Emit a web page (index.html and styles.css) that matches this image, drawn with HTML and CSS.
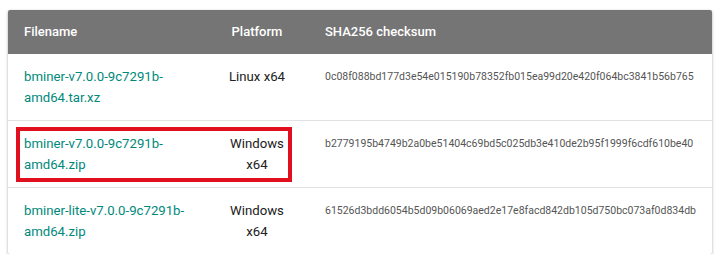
FILE: index.html
```html
<!DOCTYPE html>
<html>
<head>
<meta charset="utf-8">
<link rel="stylesheet" href="styles.css">
</head>
<body>
<div class="card">
  <table class="downloads">
    <colgroup>
      <col class="c-file">
      <col class="c-plat">
      <col class="c-sum">
    </colgroup>
    <thead>
      <tr>
        <th class="file">Filename</th>
        <th class="plat">Platform</th>
        <th class="sum">SHA256 checksum</th>
      </tr>
    </thead>
    <tbody>
      <tr>
        <td class="file"><a href="#">bminer-v7.0.0-9c7291b-amd64.tar.xz</a></td>
        <td class="plat">Linux x64</td>
        <td class="sum">0c08f088bd177d3e54e015190b78352fb015ea99d20e420f064bc3841b56b765</td>
      </tr>
      <tr>
        <td class="file"><a href="#">bminer-v7.0.0-9c7291b-amd64.zip</a></td>
        <td class="plat">Windows x64</td>
        <td class="sum">b2779195b4749b2a0be51404c69bd5c025db3e410de2b95f1999f6cdf610be40</td>
      </tr>
      <tr>
        <td class="file"><a href="#">bminer-lite-v7.0.0-9c7291b-amd64.zip</a></td>
        <td class="plat">Windows x64</td>
        <td class="sum">61526d3bdd6054b5d09b06069aed2e17e8facd842db105d750bc073af0d834db</td>
      </tr>
    </tbody>
  </table>
  <div class="highlight"></div>
</div>
</body>
</html>
```
FILE: styles.css
```css
html, body {
  margin: 0;
  padding: 0;
  background: #ffffff;
}
body {
  padding: 10px 8px 0 8px;
  font-family: Roboto, "Liberation Sans", sans-serif;
}
.card {
  position: relative;
  width: 704px;
  background: #fff;
  border-radius: 2px;
  box-shadow: 0 1px 3px rgba(0,0,0,0.35);
  overflow: hidden;
}
.downloads {
  width: 100%;
  border-collapse: collapse;
  table-layout: fixed;
}
.c-file { width: 197px; }
.c-plat { width: 104px; }
.c-sum { width: auto; }
thead th {
  background: #757575;
  color: #fff;
  font-weight: 500;
  font-size: 13px;
  height: 44px;
  padding: 0 16px;
  text-align: left;
  line-height: 20px;
}
thead th.plat { text-align: center; }
tbody td {
  padding: 12px 16px;
  font-size: 13.2px;
  line-height: 21px;
  color: #212121;
  vertical-align: top;
  height: 42px;
}
tbody tr + tr td { border-top: 1px solid #e2e2e2; }
td.plat { text-align: center; }
td.file a {
  color: #00897b;
  text-decoration: none;
}
td.sum {
  font-size: 10.5px;
  color: #555;
  white-space: nowrap;
}
.highlight {
  position: absolute;
  left: 8px;
  top: 117px;
  width: 276px;
  height: 55px;
  box-sizing: border-box;
  border: 4px solid #e0101e;
  pointer-events: none;
}
```
